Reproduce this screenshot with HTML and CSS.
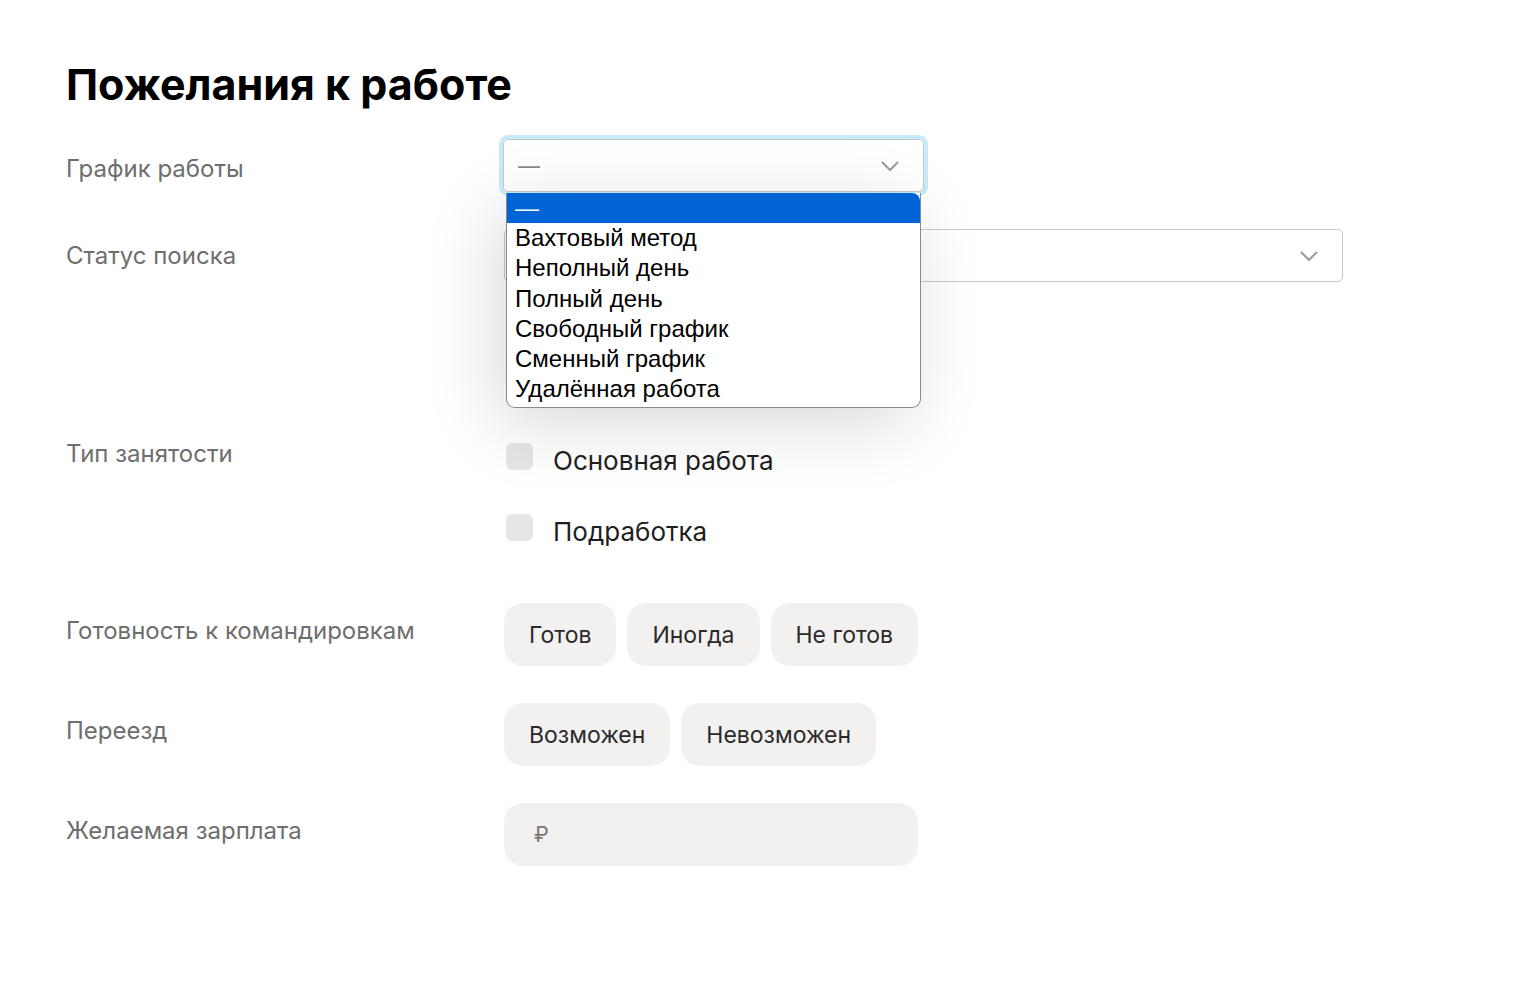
FILE: index.html
```html
<!DOCTYPE html>
<html lang="ru">
<head>
<meta charset="utf-8">
<title>Пожелания к работе</title>
<link rel="stylesheet" href="styles.css">
</head>
<body>
<main class="page">
  <h1 class="title">Пожелания к работе</h1>
  <div class="form">
    <div class="row row-select row-schedule">
      <div class="label">График работы</div>
      <div class="control">
        <div class="focus-ring">
          <div class="select select-short">
            <span class="select-value">—</span>
            <svg class="chevron" width="20" height="12" viewBox="0 0 20 12"><path d="M2 2l8 8 8-8" fill="none" stroke="#9a9a9a" stroke-width="2"/></svg>
          </div>
        </div>
        <ul class="dropdown">
          <li class="option option-active">—</li>
          <li class="option">Вахтовый метод</li>
          <li class="option">Неполный день</li>
          <li class="option">Полный день</li>
          <li class="option">Свободный график</li>
          <li class="option">Сменный график</li>
          <li class="option">Удалённая работа</li>
        </ul>
      </div>
    </div>
    <div class="row row-select row-status">
      <div class="label">Статус поиска</div>
      <div class="control">
        <div class="select select-long">
          <span class="select-value"></span>
          <svg class="chevron" width="20" height="12" viewBox="0 0 20 12"><path d="M2 2l8 8 8-8" fill="none" stroke="#9a9a9a" stroke-width="2"/></svg>
        </div>
      </div>
    </div>
    <div class="row row-check">
      <div class="label">Тип занятости</div>
      <div class="control checks">
        <label class="check"><span class="box"></span><span class="check-text">Основная работа</span></label>
        <label class="check"><span class="box"></span><span class="check-text">Подработка</span></label>
      </div>
    </div>
    <div class="row row-pill">
      <div class="label">Готовность к командировкам</div>
      <div class="control pills">
        <button class="pill">Готов</button>
        <button class="pill">Иногда</button>
        <button class="pill">Не готов</button>
      </div>
    </div>
    <div class="row row-pill">
      <div class="label">Переезд</div>
      <div class="control pills">
        <button class="pill">Возможен</button>
        <button class="pill">Невозможен</button>
      </div>
    </div>
    <div class="row row-pill">
      <div class="label">Желаемая зарплата</div>
      <div class="control">
        <div class="salary"><span class="rub">₽</span></div>
      </div>
    </div>
  </div>
</main>
</body>
</html>
```
FILE: styles.css
```css
* { box-sizing: border-box; }
html, body { margin: 0; padding: 0; background: #fff; }
body { font-family: Inter, "Noto Sans", sans-serif; color: #222; }
.page { padding: 58px 0 0 66px; }
.title { margin: 0; font-size: 43px; font-weight: 700; line-height: 52px; color: #000; letter-spacing: 0; }
.form { margin-top: 30px; }
.row { display: flex; align-items: flex-start; }
.label { width: 438px; flex: none; font-size: 24px; line-height: 30px; color: #6e6e6e; }
.control { position: relative; }
.row-schedule .label { padding-top: 14px; }
.row-status { margin-top: 38px; }
.row-status .label { padding-top: 12px; }
.focus-ring { margin: -5px; border: 4px solid #c6ecfb; border-radius: 9px; padding: 0; width: 429px; }
.select { height: 53px; border: 1px solid #c8c8c8; border-radius: 5px; background: #fff; display: flex; align-items: center; justify-content: space-between; padding: 0 23px 0 14px; }
.select-short { width: 421px; margin: 0; }
.select-long { width: 839px; }
.select-value { font-size: 22px; color: #8a8a8a; }
.chevron { display: block; }
.dropdown { position: absolute; left: 2px; top: 53px; width: 415px; margin: 0; padding: 0 0 3px; list-style: none; background: #fff; border: 1px solid #8a8a8a; border-top: 0; border-radius: 0 0 9px 9px; box-shadow: -10px 16px 70px rgba(0,0,0,0.15); font-family: "Liberation Sans", Arial, sans-serif; font-size: 24px; color: #000; z-index: 5; overflow: hidden; }
.option { height: 30.2px; line-height: 30px; padding: 0 8px; white-space: nowrap; }
.option-active { background: #0064d6; color: #fff; border-radius: 0 8px 0 0; }
.row-check { margin-top: 157px; }
.checks { display: flex; flex-direction: column; gap: 44px; padding-top: 4px; }
.check { display: flex; align-items: center; gap: 20px; height: 27px; }
.box { width: 27px; height: 27px; border-radius: 6px; background: #e6e6e6; margin-left: 2px; flex: none; }
.check-text { font-size: 26px; color: #1e1e1e; position: relative; top: 4px; }
.row-pill { margin-top: 37px; }
.row-check + .row-pill { margin-top: 62px; }
.row-pill .label { padding-top: 13px; }
.pills { display: flex; gap: 11px; }
.pill { height: 63px; border: 0; border-radius: 19px; background: #f2f1f0; font-family: Inter, "Noto Sans", sans-serif; font-size: 23px; color: #2a2a2a; padding: 0 25px; cursor: pointer; }
.salary { width: 414px; height: 63px; border-radius: 19px; background: #f2f1f0; display: flex; align-items: center; padding-left: 30px; }
.rub { font-size: 21px; color: #777; }
```
